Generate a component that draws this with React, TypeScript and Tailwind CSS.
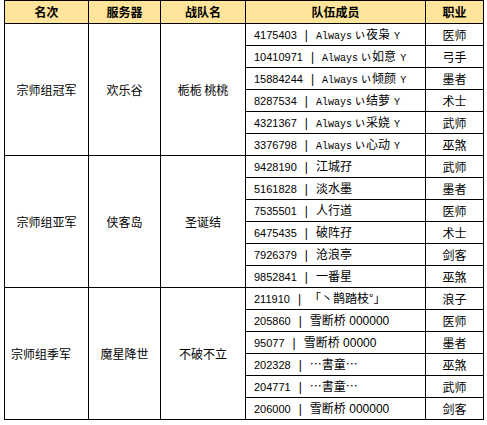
import React from "react";

type Member = { id: string; name: React.ReactNode; job: string };
type Group = { rank: string; server: string; team: React.ReactNode; rankPad?: boolean; members: Member[] };

const Mono = ({ children, className = "" }: { children: React.ReactNode; className?: string }) => (
  <span className={`font-['Liberation_Mono',monospace] text-[10px] ${className}`}>{children}</span>
);

const always = (n: string) => (
  <>
    <Mono>Always</Mono>
    <span className="ml-[2px]">ぃ{n}</span>
    <Mono className="ml-[4px]">Y</Mono>
  </>
);

const snow = (z: string) => (
  <>
    雪断桥<span className="font-['Liberation_Sans',sans-serif]"> {z}</span>
  </>
);

const groups: Group[] = [
  {
    rank: "宗师组冠军",
    server: "欢乐谷",
    team: "栀栀 桃桃",
    members: [
      { id: "4175403", name: always("夜枭"), job: "医师" },
      { id: "10410971", name: always("如意"), job: "弓手" },
      { id: "15884244", name: always("倾颜"), job: "墨者" },
      { id: "8287534", name: always("结萝"), job: "术士" },
      { id: "4321367", name: always("采娆"), job: "武师" },
      { id: "3376798", name: always("心动"), job: "巫煞" },
    ],
  },
  {
    rank: "宗师组亚军",
    server: "侠客岛",
    team: "圣诞结",
    members: [
      { id: "9428190", name: "江城孖", job: "武师" },
      { id: "5161828", name: "淡水墨", job: "墨者" },
      { id: "7535501", name: "人行道", job: "医师" },
      { id: "6475435", name: "破阵孖", job: "术士" },
      { id: "7926379", name: "沧浪亭", job: "剑客" },
      { id: "9852841", name: "一番星", job: "巫煞" },
    ],
  },
  {
    rank: "宗师组季军",
    server: "魔星降世",
    team: "不破不立",
    rankPad: true,
    members: [
      { id: "211910", name: "「丶鹊踏枝°」", job: "浪子" },
      { id: "205860", name: snow("000000"), job: "医师" },
      { id: "95077", name: snow("00000"), job: "墨者" },
      { id: "202328", name: "…書童…", job: "巫煞" },
      { id: "204771", name: "…書童…", job: "武师" },
      { id: "206000", name: snow("000000"), job: "剑客" },
    ],
  },
];

const cell = "border border-black p-0";

export default function App() {
  return (
    <div className="w-[487px] h-[425px] bg-white pl-[4px] font-['Noto_Sans_CJK_SC',sans-serif] text-[12px] text-black leading-none">
      <table className="table-fixed border-collapse w-[479px]">
        <colgroup>
          <col className="w-[84px]" />
          <col className="w-[72px]" />
          <col className="w-[85px]" />
          <col className="w-[180px]" />
          <col className="w-[58px]" />
        </colgroup>
        <thead>
          <tr className="bg-[#ffe59b] font-bold">
            <th className={`${cell} h-[23px] text-center`}>名次</th>
            <th className={`${cell} text-center`}>服务器</th>
            <th className={`${cell} text-center`}>战队名</th>
            <th className={`${cell} text-center`}>队伍成员</th>
            <th className={`${cell} text-center`}>职业</th>
          </tr>
        </thead>
        <tbody>
          {groups.map((g) =>
            g.members.map((m, i) => (
              <tr key={g.rank + m.id}>
                {i === 0 && (
                  <>
                    <td rowSpan={6} className={`${cell} text-center ${g.rankPad ? "pr-[11px]" : ""}`}>
                      {g.rank}
                    </td>
                    <td rowSpan={6} className={`${cell} text-center`}>
                      {g.server}
                    </td>
                    <td rowSpan={6} className={`${cell} text-center`}>
                      {g.team}
                    </td>
                  </>
                )}
                <td className={`${cell} h-[22px] pl-[8px] whitespace-nowrap`}>
                  <span className="font-['Liberation_Sans',sans-serif] text-[11px]">{m.id}</span>
                  <span className="font-['Liberation_Sans',sans-serif] text-[12px] mx-[8px]">|</span>
                  {m.name}
                </td>
                <td className={`${cell} text-center`}>{m.job}</td>
              </tr>
            ))
          )}
        </tbody>
      </table>
    </div>
  );
}
